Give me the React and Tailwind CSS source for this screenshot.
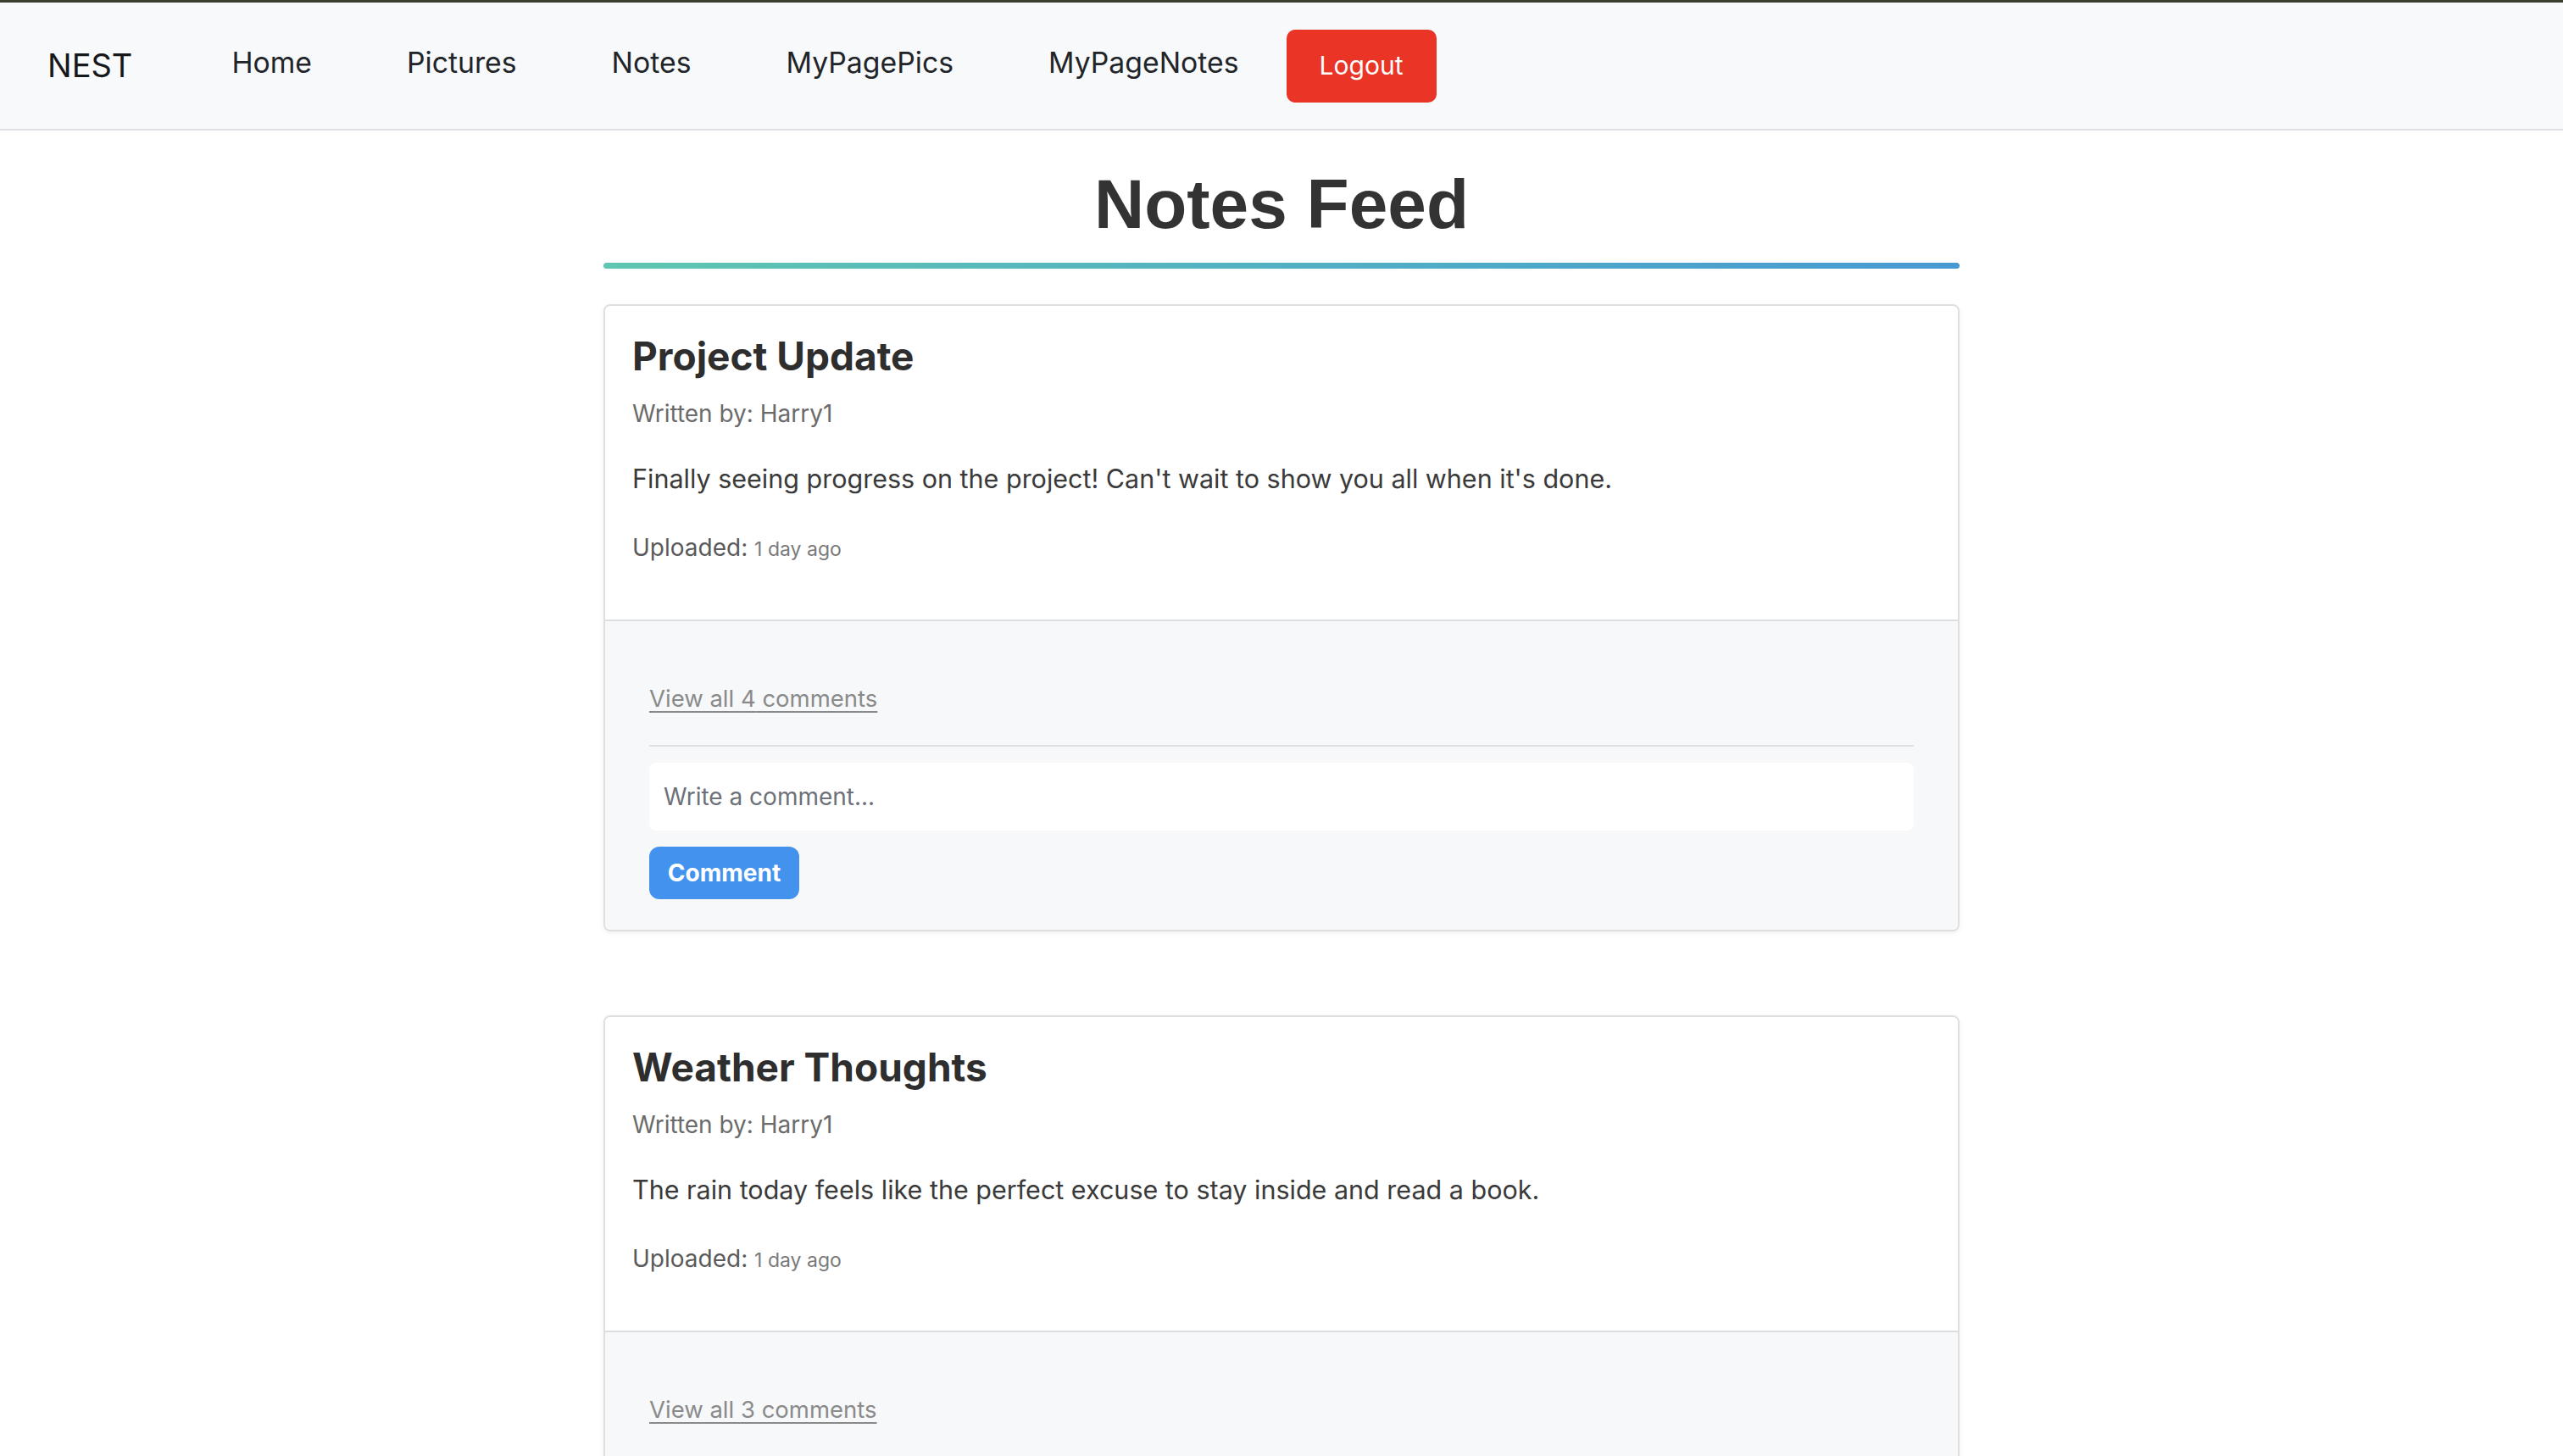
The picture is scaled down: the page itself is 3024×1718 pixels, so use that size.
import React from "react";

const notes = [
  {
    title: "Project Update",
    author: "Harry1",
    body: "Finally seeing progress on the project! Can't wait to show you all when it's done.",
    time: "1 day ago",
    comments: 4,
  },
  {
    title: "Weather Thoughts",
    author: "Harry1",
    body: "The rain today feels like the perfect excuse to stay inside and read a book.",
    time: "1 day ago",
    comments: 3,
  },
];

function NoteCard({ note }) {
  return (
    <div className="mb-[99px] rounded-[8px] border-2 border-[#dedfe1] bg-white shadow-[0_2px_6px_rgba(0,0,0,0.06)] overflow-hidden">
      <div className="border-b-2 border-[#dcdee1] bg-white px-[32px] pt-[31px] pb-[61px]">
        <h2 className="text-[46px] leading-[56px] font-bold text-[#2e2e2e]">
          {note.title}
        </h2>
        <p className="mt-[19px] text-[28px] leading-[42px] text-[#6b6b6b]">
          Written by: {note.author}
        </p>
        <p className="mt-[33px] text-[30.5px] leading-[46px] text-[#3a3a3a]">
          {note.body}
        </p>
        <p className="mt-[36px] text-[28px] leading-[44px] text-[#5a5a5a]">
          Uploaded: <span className="text-[23px] text-[#7a7a7a]">{note.time}</span>
        </p>
      </div>
      <div className="bg-[#f7f8fa] px-[52px] pt-[70px] pb-[36px]">
        <a className="block w-fit text-[27.5px] leading-[42px] text-[#8a8a8a] underline underline-offset-[5px] decoration-2">
          View all {note.comments} comments
        </a>
        <div className="mt-[34px] h-[2px] bg-[#dee0e3]" />
        <div className="mt-[19px] flex h-[80px] items-center rounded-[8px] bg-white pl-[17px]">
          <input
            placeholder="Write a comment..."
            className="w-full bg-transparent text-[28px] text-[#333] outline-none placeholder:text-[#6c717a]"
          />
        </div>
        <button className="mt-[19px] flex h-[62px] w-[177px] items-center justify-center rounded-[12px] bg-[#4393ee] text-[28px] font-bold text-white">
          Comment
        </button>
      </div>
    </div>
  );
}

export default function App() {
  return (
    <div
      className="min-h-screen bg-white"
      style={{ fontFamily: "Inter, 'Noto Sans', sans-serif" }}
    >
      <nav className="flex h-[154px] items-center border-t-[3px] border-b-2 border-t-[#3a3e2c] border-b-[#dee0e3] bg-[#f8f9fa] pl-[56px]">
        <span className="text-[38px] text-[#16181b]">NEST</span>
        <div className="ml-[61px] flex items-center">
          {["Home", "Pictures", "Notes", "MyPagePics", "MyPageNotes"].map((l) => (
            <a key={l} className="px-[56px] text-[33.75px] text-[#212529] -mt-[7px]">
              {l}
            </a>
          ))}
          <button className="flex h-[86px] w-[177px] items-center justify-center rounded-[10px] bg-[#e93426] text-[30px] text-white">
            Logout
          </button>
        </div>
      </nav>
      <main className="mx-auto w-[1600px]">
        <h1
          className="mt-[39px] text-center text-[82px] leading-[96px] font-bold text-[#333]"
          style={{ fontFamily: "'Liberation Sans', Arial, sans-serif" }}
        >
          Notes Feed
        </h1>
        <div className="mt-[21px] h-[7px] rounded-full bg-gradient-to-r from-[#5fc6b0] to-[#4899d2]" />
        <div className="mt-[42px]">
          {notes.map((n) => (
            <NoteCard key={n.title} note={n} />
          ))}
        </div>
      </main>
    </div>
  );
}
